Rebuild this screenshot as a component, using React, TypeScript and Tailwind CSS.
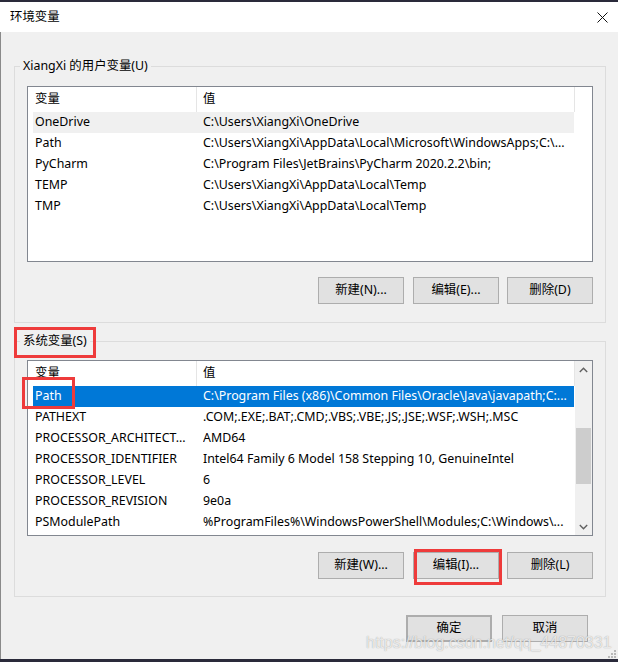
import React from "react"

const font = "font-['Segoe_UI','Noto_Sans','Noto_Sans_CJK_SC',sans-serif]"

const userVars: [string, string][] = [
  ["OneDrive", "C:\\Users\\XiangXi\\OneDrive"],
  ["Path", "C:\\Users\\XiangXi\\AppData\\Local\\Microsoft\\WindowsApps;C:\\..."],
  ["PyCharm", "C:\\Program Files\\JetBrains\\PyCharm 2020.2.2\\bin;"],
  ["TEMP", "C:\\Users\\XiangXi\\AppData\\Local\\Temp"],
  ["TMP", "C:\\Users\\XiangXi\\AppData\\Local\\Temp"],
]

const sysVars: [string, string][] = [
  ["Path", "C:\\Program Files (x86)\\Common Files\\Oracle\\Java\\javapath;C:..."],
  ["PATHEXT", ".COM;.EXE;.BAT;.CMD;.VBS;.VBE;.JS;.JSE;.WSF;.WSH;.MSC"],
  ["PROCESSOR_ARCHITECT...", "AMD64"],
  ["PROCESSOR_IDENTIFIER", "Intel64 Family 6 Model 158 Stepping 10, GenuineIntel"],
  ["PROCESSOR_LEVEL", "6"],
  ["PROCESSOR_REVISION", "9e0a"],
  ["PSModulePath", "%ProgramFiles%\\WindowsPowerShell\\Modules;C:\\Windows\\..."],
]

function Scrollbar() {
  return (
    <div className="w-[17px] h-full bg-[#f0f0f0] flex flex-col">
      <div className="h-[17px] flex items-center justify-center">
        <svg width="9" height="6" viewBox="0 0 9 6">
          <path d="M0.8 5 L4.5 1.3 L8.2 5" fill="none" stroke="#606060" strokeWidth="1.4" />
        </svg>
      </div>
      <div className="h-[50px]" />
      <div className="h-[56px] mx-[1px] bg-[#cdcdcd]" />
      <div className="flex-1" />
      <div className="h-[17px] flex items-center justify-center">
        <svg width="9" height="6" viewBox="0 0 9 6">
          <path d="M0.8 1 L4.5 4.7 L8.2 1" fill="none" stroke="#606060" strokeWidth="1.4" />
        </svg>
      </div>
    </div>
  )
}

function VarList({ rows, selected, focused, scroll }: { rows: [string, string][]; selected: number; focused: boolean; scroll?: boolean }) {
  return (
    <div className="h-[176px] border border-[#828790] bg-white flex">
      <div className="flex-1 flex flex-col overflow-hidden">
        <div className="flex h-[25px] items-center border-r border-[#e5e5e5] shrink-0">
          <div className="w-[169px] h-full flex items-center pl-[7px] border-r border-[#e5e5e5]">变量</div>
          <div className="pl-[6px]">值</div>
        </div>
        {rows.map(([name, value], i) => {
          const sel = i === selected
          const bg = sel ? (focused ? "bg-[#0078d7] text-white" : "bg-[#f0f0f0]") : ""
          return (
            <div key={name} className={`ml-[5px] mr-[1px] h-[21px] shrink-0 flex items-center whitespace-nowrap ${bg}`}>
              <div className="w-[170px] pl-[2px] overflow-hidden">{name}</div>
              <div className="flex-1 overflow-hidden">{value}</div>
            </div>
          )
        })}
      </div>
      <div className="w-[17px]">{scroll && <Scrollbar />}</div>
    </div>
  )
}

function Btn({ children, className = "" }: { children: React.ReactNode; className?: string }) {
  return (
    <div className={`w-[86px] h-[27px] border border-[#adadad] bg-[#e1e1e1] flex items-center justify-center ${className}`}>
      {children}
    </div>
  )
}

export default function App() {
  return (
    <div className={`relative w-[618px] h-[662px] overflow-hidden flex flex-col bg-[#f0f0f0] text-[12.4px] text-black ${font}`}>
      <div className="h-[2px] bg-[#2a2a3a] shrink-0" />

      {/* Title bar */}
      <div className="h-[30px] bg-white flex items-center justify-between pl-[10px] pr-[10px] shrink-0">
        <span>环境变量</span>
        <svg width="11" height="11" viewBox="0 0 11 11">
          <path d="M0.5 0.5 L10.5 10.5 M10.5 0.5 L0.5 10.5" stroke="#111" strokeWidth="1" />
        </svg>
      </div>

      <div className="flex-1 flex flex-col border-l border-[#8a8a8a]">
        <fieldset className="ml-[13px] mt-[26px] w-[592px] border border-[#dcdcdc] pl-[12px] pr-[12px] pt-[12px] pb-[18px]">
          <legend className="ml-[-7px] px-[3px] leading-[16px]">XiangXi 的用户变量(U)</legend>
          <VarList rows={userVars} selected={0} focused={false} />
          <div className="mt-[15px] flex justify-end">
            <Btn>新建(N)...</Btn>
            <Btn className="ml-[9px]">编辑(E)...</Btn>
            <Btn className="ml-[8px]">删除(D)</Btn>
          </div>
        </fieldset>

        <fieldset className="ml-[13px] mt-[10px] w-[592px] border border-[#dcdcdc] pl-[12px] pr-[12px] pt-[11px] pb-[17px]">
          <legend className="ml-[-7px] px-[3px] leading-[16px]">系统变量(S)</legend>
          <VarList rows={sysVars} selected={0} focused={true} scroll />
          <div className="mt-[16px] flex justify-end">
            <Btn>新建(W)...</Btn>
            <Btn className="ml-[9px]">编辑(I)...</Btn>
            <Btn className="ml-[8px]">删除(L)</Btn>
          </div>
        </fieldset>

        <div className="mt-[18px] flex justify-end pr-[30px] gap-[10px]">
          <Btn className="border-2 border-[#0078d7]">确定</Btn>
          <Btn>取消</Btn>
        </div>
      </div>

      <div className="h-[3px] bg-[#2a2a3a] shrink-0" />

      {/* Red annotation boxes */}
      <div className="absolute left-[14px] top-[327px] w-[82px] h-[31px] border-[3px] border-[#ee3b3b]" />
      <div className="absolute left-[22px] top-[377px] w-[53px] h-[32px] border-[3px] border-[#ee3b3b]" />
      <div className="absolute left-[414px] top-[549px] w-[88px] h-[36px] border-[3px] border-[#ee3b3b]" />

      {/* Watermark */}
      <div className="absolute left-[366px] top-[633px] font-['Liberation_Sans',sans-serif] text-[16px] leading-[20px] text-[rgba(255,255,255,0.75)] [text-shadow:0_0_1px_rgba(90,90,90,0.6)] whitespace-nowrap">
        https://blog.csdn.net/qq_44870331
      </div>

      {/* Resize grip */}
      <svg className="absolute right-[2px] bottom-[4px]" width="8" height="8" viewBox="0 0 8 8">
        <rect x="6" y="0" width="2" height="2" fill="#b8b8b8" />
        <rect x="3" y="3" width="2" height="2" fill="#b8b8b8" />
        <rect x="6" y="3" width="2" height="2" fill="#b8b8b8" />
        <rect x="0" y="6" width="2" height="2" fill="#b8b8b8" />
        <rect x="3" y="6" width="2" height="2" fill="#b8b8b8" />
        <rect x="6" y="6" width="2" height="2" fill="#b8b8b8" />
      </svg>
    </div>
  )
}
